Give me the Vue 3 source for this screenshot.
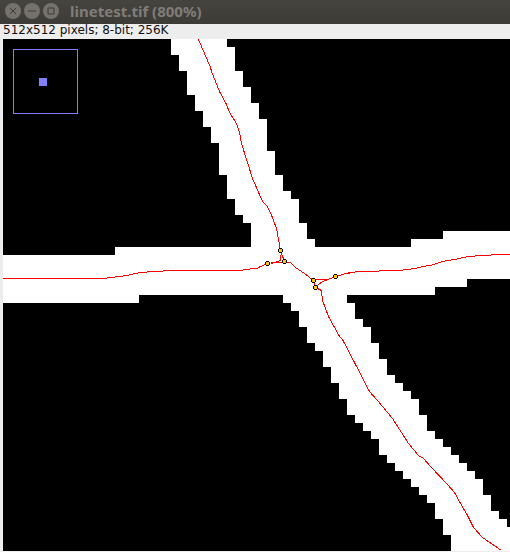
<script setup>
const points = [[280, 250], [267, 263], [284, 261], [313, 280], [315, 287], [335, 276]]
</script>

<template>
  <main class="window">
    <header class="titlebar">
      <button class="control" aria-label="Close">
        <svg viewBox="0 0 16 16"><path d="M5 5l6 6M11 5l-6 6" /></svg>
      </button>
      <button class="control" aria-label="Minimize">
        <svg viewBox="0 0 16 16"><path d="M4 8h8" /></svg>
      </button>
      <button class="control" aria-label="Maximize">
        <svg viewBox="0 0 16 16"><path d="M5 5h6v6H5z" /></svg>
      </button>
      <h1 class="title">linetest.tif (800%)</h1>
    </header>
    <p class="info">512x512 pixels; 8-bit; 256K</p>
    <div class="canvas">
      <svg class="image" viewBox="3 39 507 512" shape-rendering="crispEdges">
        <path fill="#000" d="M3 39h507v512H3z" />
        <path
          fill="#fff"
          d="M171 39V55H179V71H187V95H195V111H203V127H211V143H219V175H227V199H235V215H243V223H251V247H115V255H3V303H139V295H283V303H291V311H299V327H307V343H315V351H323V367H331V383H339V399H347V415H355V423H363V431H371V439H379V455H387V463H395V471H403V479H411V487H419V495H427V503H435V519H443V535H451V551H510V527H507V519H499V511H491V495H483V479H475V471H467V463H459V455H451V447H443V439H435V431H427V415H419V399H411V391H403V383H395V375H387V359H379V343H371V327H363V319H355V303H347V295H435V287H467V279H510V231H443V239H411V247H315V239H307V223H299V199H291V191H283V175H275V151H267V119H259V103H251V87H243V71H235V47H227V39Z"
        />
        <g class="trace">
          <path d="M198.5 39.5L210.5 67.5L211.5 71.5L219.5 91.5L226.5 104.5L229.5 112.5L236.5 123.5L239.5 132.5L241.5 143.5L247.5 162.5L252.5 178.5L262.5 201.5L267.5 206.5L272.5 217.5L276.5 228.5L280.5 250.5L284.5 261.5" />
          <path d="M3 278.5H107M107 277.5h8M115 276.5h8M123 275.5h6M129 274.5h4M133 273.5h5M138 272.5h9M147 271.5h16M163 270.5h80M243 269.5h7M250 268.5h7L260.5 266.5L267.5 263.5M271 262.5H284L290.5 262.5L295.5 267.5L304.5 273.5L313.5 280.5" />
          <path d="M280.5 255V260.5L277.5 261.5L271 263.5" />
          <path d="M313.5 279.5H328L335.5 276.5L346 273.5M315.5 287.5L318.5 284.5L322.5 281.5L328.5 279.5" />
          <path d="M346 273.5h4M348 272.5h7M355 271.5h24M379 270.5h24M403 269.5h8M411 268.5h6M417 267.5h4M421 266.5h5M426 265.5h6M432 264.5h3M435 263.5h3M438 262.5h3M441 261.5h4M445 260.5h6M451 259.5h6M457 258.5h4M461 257.5h5M466 256.5h9M475 255.5h16M491 254.5h19" />
          <path d="M313.5 280.5L315.5 287.5L321.5 290.5L322.5 300.5L328.5 316.5L339.5 336.5L342.5 339.5L354.5 362.5L369.5 391.5L377.5 400.5L392.5 418.5L408.5 443.5L418.5 455.5L423.5 458.5L430.5 466.5L447.5 484.5L454.5 492.5L459.5 501.5L467.5 515.5L473.5 527.5L482.5 537.5L501.5 550.5" />
        </g>
        <path d="M13.5 49.5h64v64h-64z" fill="none" stroke="#8080ff" />
        <path d="M39 78h8v8h-8z" fill="#8080ff" />
        <g v-for="([x, y], i) in points" :key="i">
          <path :transform="`translate(${x} ${y})`" d="M-1 -2h3v1h1v3h-1v1h-3v-1h-1v-3h1z" />
          <path :transform="`translate(${x} ${y})`" fill="#ffc800" d="M-1 -1h3v3h-3z" />
        </g>
      </svg>
    </div>
  </main>
</template>

<style>
body {
  margin: 0;
  background: #ededed;
}
</style>

<style scoped>
.titlebar {
  display: flex;
  align-items: center;
  gap: 3px;
  box-sizing: border-box;
  height: 24px;
  padding: 0 5px 2px;
  background: linear-gradient(#45443f, #3c3b37);
}
.control {
  width: 16px;
  height: 16px;
  padding: 0;
  border: 0;
  border-radius: 50%;
  background: #74726b;
}
.control svg {
  display: block;
  fill: none;
  stroke: #3c3b37;
  stroke-width: 1;
}
.title {
  margin: 0 0 0 8px;
  color: #807d78;
  font: bold 15px/20px "Noto Sans", sans-serif;
}
.info {
  height: 15px;
  margin: 0;
  padding-left: 3px;
  color: #111;
  font: 12px/13px "DejaVu Sans", sans-serif;
}
.canvas {
  padding: 0 0 1px 3px;
}
.image {
  display: block;
  width: 100%;
}
.trace {
  fill: none;
  stroke: #f00;
}
</style>
